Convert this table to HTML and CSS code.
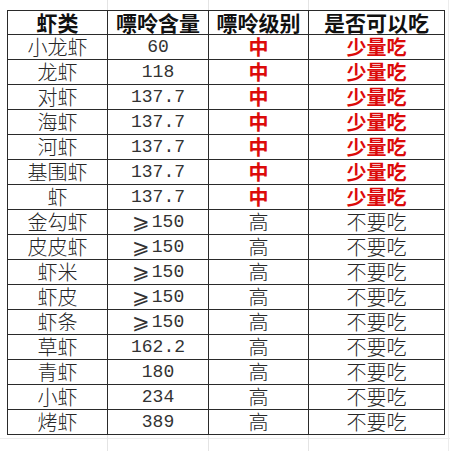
FILE: index.html
```html
<!DOCTYPE html>
<html lang="zh-CN">
<head>
<meta charset="utf-8">
<title>虾类嘌呤含量</title>
<link rel="stylesheet" href="styles.css">
</head>
<body>
<div class="sheet">
  <div class="grid">
    <div class="cell head">虾类</div><div class="cell head">嘌呤含量</div><div class="cell head">嘌呤级别</div><div class="cell head">是否可以吃</div>

    <div class="cell">小龙虾</div><div class="cell num">60</div><div class="cell mid">中</div><div class="cell mid">少量吃</div>
    <div class="cell">龙虾</div><div class="cell num">118</div><div class="cell mid">中</div><div class="cell mid">少量吃</div>
    <div class="cell">对虾</div><div class="cell num">137.7</div><div class="cell mid">中</div><div class="cell mid">少量吃</div>
    <div class="cell">海虾</div><div class="cell num">137.7</div><div class="cell mid">中</div><div class="cell mid">少量吃</div>
    <div class="cell">河虾</div><div class="cell num">137.7</div><div class="cell mid">中</div><div class="cell mid">少量吃</div>
    <div class="cell">基围虾</div><div class="cell num">137.7</div><div class="cell mid">中</div><div class="cell mid">少量吃</div>
    <div class="cell">虾</div><div class="cell num">137.7</div><div class="cell mid">中</div><div class="cell mid">少量吃</div>
    <div class="cell">金勾虾</div><div class="cell num"><span class="ge">⩾</span>150</div><div class="cell">高</div><div class="cell">不要吃</div>
    <div class="cell">皮皮虾</div><div class="cell num"><span class="ge">⩾</span>150</div><div class="cell">高</div><div class="cell">不要吃</div>
    <div class="cell">虾米</div><div class="cell num"><span class="ge">⩾</span>150</div><div class="cell">高</div><div class="cell">不要吃</div>
    <div class="cell">虾皮</div><div class="cell num"><span class="ge">⩾</span>150</div><div class="cell">高</div><div class="cell">不要吃</div>
    <div class="cell">虾条</div><div class="cell num"><span class="ge">⩾</span>150</div><div class="cell">高</div><div class="cell">不要吃</div>
    <div class="cell">草虾</div><div class="cell num">162.2</div><div class="cell">高</div><div class="cell">不要吃</div>
    <div class="cell">青虾</div><div class="cell num">180</div><div class="cell">高</div><div class="cell">不要吃</div>
    <div class="cell">小虾</div><div class="cell num">234</div><div class="cell">高</div><div class="cell">不要吃</div>
    <div class="cell">烤虾</div><div class="cell num">389</div><div class="cell">高</div><div class="cell">不要吃</div>
  </div>
</div>
</body>
</html>
```

FILE: styles.css
```css
html, body {
  margin: 0;
  padding: 0;
  background: #ffffff;
}

.sheet {
  width: 450px;
  height: 451px;
  padding: 10px 0 0 7px;
  box-sizing: border-box;
  background-color: #ffffff;
  background-image:
    linear-gradient(to right, transparent 107px, #e4e4e4 107px, #e4e4e4 108px, transparent 108px),
    linear-gradient(to right, transparent 208px, #e4e4e4 208px, #e4e4e4 209px, transparent 209px),
    linear-gradient(to right, transparent 308px, #e4e4e4 308px, #e4e4e4 309px, transparent 309px),
    linear-gradient(to right, transparent 448px, #ececec 448px, #ececec 449px, transparent 449px),
    linear-gradient(to bottom, transparent 438px, #ececec 438px, #ececec 439px, transparent 439px);
}

.grid {
  display: grid;
  grid-template-columns: 99px 100px 99px 135px;
  grid-template-rows: 23px repeat(16, 24px);
  gap: 1px;
  padding: 1px;
  width: max-content;
  background: #2a2a2a;
}

.cell {
  background: #ffffff;
  display: flex;
  align-items: center;
  justify-content: center;
  font-family: "Noto Sans CJK SC", "Noto Sans", sans-serif;
  font-size: 20px;
  font-weight: 300;
  color: #262626;
  line-height: 1;
  white-space: nowrap;
}

.head {
  font-size: 21px;
  font-weight: 700;
  color: #111111;
}

.mid {
  color: #dc0a0a;
  font-weight: 700;
}

.num {
  font-family: "Liberation Mono", "DejaVu Sans Mono", monospace;
  font-size: 18px;
  font-weight: 400;
  color: #333333;
}

.ge {
  font-family: "DejaVu Sans", sans-serif;
  font-size: 21px;
  font-weight: 300;
  margin-right: 2px;
}
```
